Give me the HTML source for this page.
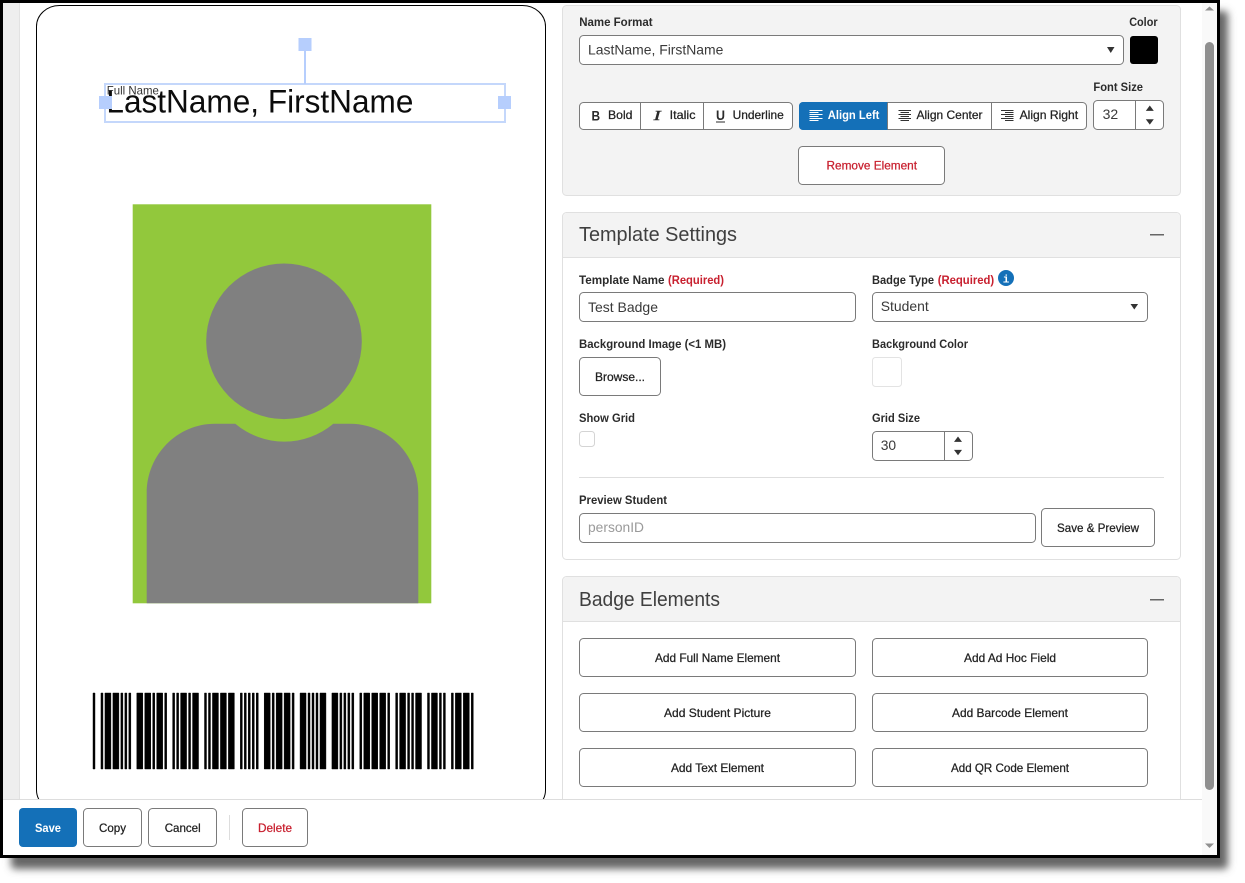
<!DOCTYPE html>
<html lang="en">
<head>
<meta charset="utf-8">
<title>Badge Template Editor</title>
<style>
html,body{margin:0;padding:0;background:#fff;width:1245px;height:883px;overflow:hidden}
svg{display:block}
text{font-family:"Liberation Sans",Arial,sans-serif;white-space:pre}
.l{font-size:12px;font-weight:bold;fill:#2b2b2b}
.r{fill:#c8202f}
.b{font-size:12px;font-weight:bold;fill:#2b2b2b;opacity:.93}
.m{font-weight:normal;fill:#222;stroke:#222;stroke-width:.25;opacity:1}
.d{font-weight:normal;fill:#c8202f;stroke:#c8202f;stroke-width:.25;opacity:1}
.v{font-size:14px;fill:#3a3a3a}
.h{font-size:20px;fill:#3f3f3f}
.box{fill:#fff;stroke:#7a7a7a;stroke-width:1}
.div{stroke:#7a7a7a;stroke-width:1}
.ic{stroke-width:1;fill:none}
</style>
</head>
<body>
<svg width="1245" height="883" viewBox="0 0 1245 883" xmlns="http://www.w3.org/2000/svg">
<defs>
<filter id="sh" x="-5%" y="-5%" width="110%" height="110%"><feGaussianBlur stdDeviation="4"/></filter>
<clipPath id="view"><rect x="3" y="3" width="1214" height="796"/></clipPath>
</defs>

<!-- window shadow + frame -->
<rect x="11" y="11" width="1217" height="858" rx="4" fill="#666" filter="url(#sh)"/>
<rect x="0" y="0" width="1220" height="858" fill="#000"/>
<rect x="3" y="3" width="1214" height="852" fill="#fff"/>

<!-- left gutter -->
<rect x="3" y="3" width="16" height="796" fill="#eeeeee"/>
<rect x="19" y="3" width="1" height="796" fill="#e2e2e2"/>

<g clip-path="url(#view)">
<!-- badge card -->
<rect x="36.5" y="5.5" width="509" height="805.5" rx="23" ry="21" fill="#fff" stroke="#000" stroke-width="1"/>

<!-- name element -->
<text x="106.4" y="112.7" font-size="32" fill="#0c0c0c" textLength="307" lengthAdjust="spacingAndGlyphs">LastName, FirstName</text>
<text x="106.8" y="94.3" font-size="12" fill="#333" textLength="52" lengthAdjust="spacingAndGlyphs">Full Name</text>
<rect x="105" y="84" width="400" height="38" fill="none" stroke="#c4d7fb" stroke-width="2"/>
<rect x="304" y="51" width="2" height="33" fill="#b6cefd"/>
<rect x="298.5" y="38" width="13" height="13" fill="#b6cefd"/>
<rect x="99" y="96" width="13" height="13" fill="#b6cefd"/>
<rect x="498" y="96" width="13" height="13" fill="#b6cefd"/>

<!-- photo -->
<rect x="132.7" y="204.3" width="298.6" height="399" fill="#92c83c"/>
<circle cx="284" cy="341.3" r="77.8" fill="#808080"/>
<path d="M146.7 603.3V493C146.7 455 177 423.7 215 423.7H235.3A76 76 0 0 0 333.3 423.7H350C388 423.7 418.3 455 418.3 493V603.3Z" fill="#808080"/>

<!-- barcode -->
<g transform="translate(93 693) scale(.9955 1) translate(-93 -693)">
<path fill="#000" stroke="#000" stroke-width=".45" d="M93 693h2v76h-2zM101 693h2v76h-2zM105 693h6v76h-6zM113 693h6v76h-6zM121 693h2v76h-2z
M125 693h2v76h-2zM129 693h2v76h-2zM137 693h6v76h-6zM145 693h6v76h-6zM153 693h2v76h-2z
M157 693h6v76h-6zM165 693h2v76h-2zM173 693h2v76h-2zM177 693h2v76h-2zM181 693h6v76h-6z
M189 693h2v76h-2zM193 693h6v76h-6zM205 693h2v76h-2zM209 693h2v76h-2zM213 693h6v76h-6z
M221 693h6v76h-6zM229 693h6v76h-6zM241 693h2v76h-2zM245 693h2v76h-2zM249 693h2v76h-2z
M253 693h2v76h-2zM257 693h2v76h-2zM265 693h6v76h-6zM273 693h2v76h-2zM277 693h6v76h-6z
M285 693h6v76h-6zM293 693h2v76h-2zM301 693h6v76h-6zM309 693h2v76h-2zM313 693h2v76h-2z
M317 693h2v76h-2zM321 693h6v76h-6zM333 693h6v76h-6zM341 693h2v76h-2zM345 693h2v76h-2z
M349 693h2v76h-2zM353 693h2v76h-2zM361 693h2v76h-2zM365 693h6v76h-6zM373 693h6v76h-6z
M381 693h6v76h-6zM389 693h2v76h-2zM397 693h2v76h-2zM401 693h6v76h-6zM409 693h2v76h-2z
M413 693h2v76h-2zM417 693h6v76h-6zM429 693h2v76h-2zM433 693h6v76h-6zM441 693h2v76h-2z
M445 693h2v76h-2zM453 693h2v76h-2zM457 693h6v76h-6zM465 693h6v76h-6zM473 693h2v76h-2z"/>
</g>

<!-- element settings panel -->
<rect x="562.5" y="5.5" width="618" height="190" rx="4" fill="#f3f3f3" stroke="#e0e0e0"/>
<text class="l" x="579.2" y="26" textLength="73.4" lengthAdjust="spacingAndGlyphs">Name Format</text>
<text class="l" x="1129.2" y="26" textLength="28.4" lengthAdjust="spacingAndGlyphs">Color</text>
<rect class="box" x="579.5" y="35.5" width="544" height="29" rx="4"/>
<text class="v" x="588" y="54.3" textLength="135.4" lengthAdjust="spacingAndGlyphs">LastName, FirstName</text>
<path d="M1107 47h7.5l-3.75 6z" fill="#333"/>
<rect x="1130" y="36" width="28" height="28" rx="3" fill="#000"/>
<text class="l" x="1093.4" y="91" textLength="49.6" lengthAdjust="spacingAndGlyphs">Font Size</text>

<!-- B I U group -->
<rect class="box" x="579.5" y="102.5" width="213" height="27" rx="4"/>
<line class="div" x1="640.5" y1="102.5" x2="640.5" y2="129.5"/>
<line class="div" x1="703.5" y1="102.5" x2="703.5" y2="129.5"/>
<text x="591.5" y="120.3" font-size="14" font-weight="bold" fill="#2b2b2b" textLength="8.6" lengthAdjust="spacingAndGlyphs">B</text>
<text class="b m" x="608" y="119" textLength="24.5" lengthAdjust="spacingAndGlyphs">Bold</text>
<text x="653.6" y="120" font-size="14" font-style="italic" fill="#2b2b2b" style="font-family:'Liberation Serif',serif" stroke="#2b2b2b" stroke-width=".4" textLength="7" lengthAdjust="spacingAndGlyphs">I</text>
<text class="b m" x="669.7" y="119" textLength="25.8" lengthAdjust="spacingAndGlyphs">Italic</text>
<text x="716" y="120" font-size="14" font-weight="bold" fill="#2b2b2b" textLength="9" lengthAdjust="spacingAndGlyphs">U</text>
<rect x="716" y="121.5" width="9" height="1" fill="#2b2b2b"/>
<text class="b m" x="732.6" y="119" textLength="51.2" lengthAdjust="spacingAndGlyphs">Underline</text>

<!-- align group -->
<rect class="box" x="799.5" y="102.5" width="287" height="27" rx="4"/>
<path d="M803 102H888V130H803A4 4 0 0 1 799 126V106A4 4 0 0 1 803 102Z" fill="#1470b8"/>
<line class="div" x1="887.5" y1="102.5" x2="887.5" y2="129.5"/>
<line class="div" x1="991.5" y1="102.5" x2="991.5" y2="129.5"/>
<path class="ic" stroke="#fff" d="M809.5 110.5h13M809.5 112.5h9M809.5 114.5h13M809.5 116.5h9M809.5 118.5h13M809.5 120.5h9"/>
<text class="b" x="827.8" y="119" textLength="51.6" lengthAdjust="spacingAndGlyphs" style="fill:#fff;opacity:1">Align Left</text>
<path class="ic" stroke="#333" d="M898.5 110.5h12.5M900.5 112.5h8.5M898.5 114.5h12.5M900.5 116.5h8.5M898.5 118.5h12.5M900.5 120.5h8.5"/>
<text class="b m" x="916.5" y="119" textLength="66" lengthAdjust="spacingAndGlyphs">Align Center</text>
<path class="ic" stroke="#333" d="M1001 110.5h12.5M1005 112.5h8.5M1001 114.5h12.5M1005 116.5h8.5M1001 118.5h12.5M1005 120.5h8.5"/>
<text class="b m" x="1019.6" y="119" textLength="58.5" lengthAdjust="spacingAndGlyphs">Align Right</text>

<!-- font size spinner -->
<rect class="box" x="1093.5" y="100.5" width="70" height="29" rx="4"/>
<line class="div" x1="1135.5" y1="100.5" x2="1135.5" y2="129.5"/>
<text class="v" x="1102.6" y="119" textLength="15.6" lengthAdjust="spacingAndGlyphs">32</text>
<path d="M1145.8 110.9l4-5.4 4 5.4zM1145.8 119.2h8l-4 5.4z" fill="#333"/>

<rect class="box" x="798.5" y="146.5" width="146" height="38" rx="4"/>
<text class="b d" x="826.5" y="169.7" textLength="90.5" lengthAdjust="spacingAndGlyphs">Remove Element</text>

<!-- template settings -->
<rect x="562.5" y="212.5" width="618" height="347" rx="4" fill="#fff" stroke="#e0e0e0"/>
<path d="M566.5 213H1176.5A4 4 0 0 1 1180 217V257.5H563V217A4 4 0 0 1 566.5 213Z" fill="#f3f3f3"/>
<line x1="563" y1="257.5" x2="1180" y2="257.5" stroke="#e0e0e0"/>
<text class="h" x="579" y="241" textLength="158" lengthAdjust="spacingAndGlyphs">Template Settings</text>
<rect x="1150" y="234" width="14" height="1.5" fill="#666"/>

<text class="l" x="579" y="284" textLength="85.5" lengthAdjust="spacingAndGlyphs">Template Name</text>
<text class="l r" x="668" y="284" textLength="56" lengthAdjust="spacingAndGlyphs" style="fill:#c8202f">(Required)</text>
<rect class="box" x="579.5" y="292.5" width="276" height="29" rx="4"/>
<text class="v" x="588" y="312" textLength="70" lengthAdjust="spacingAndGlyphs">Test Badge</text>

<text class="l" x="872" y="284" textLength="62" lengthAdjust="spacingAndGlyphs">Badge Type</text>
<text class="l r" x="937.7" y="284" textLength="56.5" lengthAdjust="spacingAndGlyphs" style="fill:#c8202f">(Required)</text>
<circle cx="1006" cy="278" r="8" fill="#1470b8"/>
<text x="1006" y="282.5" font-size="11" font-weight="bold" fill="#fff" text-anchor="middle" style="font-family:'Liberation Mono',monospace">i</text>
<rect class="box" x="872.5" y="292.5" width="275" height="29" rx="4"/>
<text class="v" x="880.7" y="311" textLength="48" lengthAdjust="spacingAndGlyphs">Student</text>
<path d="M1130.5 304h7.6l-3.8 5.5z" fill="#333"/>

<text class="l" x="579" y="348" textLength="147" lengthAdjust="spacingAndGlyphs">Background Image (&lt;1 MB)</text>
<rect class="box" x="579.5" y="357.5" width="81" height="38" rx="4"/>
<text class="b m" x="595" y="381" textLength="50" lengthAdjust="spacingAndGlyphs">Browse...</text>

<text class="l" x="872" y="348" textLength="96" lengthAdjust="spacingAndGlyphs">Background Color</text>
<rect x="872.5" y="357.5" width="29" height="29" rx="3" fill="#fff" stroke="#e3e3e3"/>

<text class="l" x="579" y="422" textLength="56" lengthAdjust="spacingAndGlyphs">Show Grid</text>
<rect x="579.5" y="431.5" width="15" height="15" rx="3" fill="#fff" stroke="#d4d4d4"/>

<text class="l" x="872" y="422" textLength="48" lengthAdjust="spacingAndGlyphs">Grid Size</text>
<rect class="box" x="872.5" y="431.5" width="100" height="29" rx="4"/>
<line class="div" x1="944.5" y1="431.5" x2="944.5" y2="460.5"/>
<text class="v" x="880.7" y="450" textLength="15.4" lengthAdjust="spacingAndGlyphs">30</text>
<path d="M954 441.9l4-5.4 4 5.4zM954 449.9h8l-4 5.4z" fill="#333"/>

<line x1="579" y1="477.5" x2="1164" y2="477.5" stroke="#dedede"/>

<text class="l" x="579" y="504" textLength="88" lengthAdjust="spacingAndGlyphs">Preview Student</text>
<rect class="box" x="579.5" y="513.5" width="456" height="29" rx="4"/>
<text x="588" y="532" font-size="14" fill="#9a9a9a" textLength="56" lengthAdjust="spacingAndGlyphs">personID</text>
<rect class="box" x="1041.5" y="508.5" width="113" height="38" rx="4"/>
<text class="b m" x="1057" y="532" textLength="82" lengthAdjust="spacingAndGlyphs">Save &amp; Preview</text>

<!-- badge elements -->
<rect x="562.5" y="576.5" width="618" height="260" rx="4" fill="#fff" stroke="#e0e0e0"/>
<path d="M566.5 577H1176.5A4 4 0 0 1 1180 581V621.5H563V581A4 4 0 0 1 566.5 577Z" fill="#f3f3f3"/>
<line x1="563" y1="621.5" x2="1180" y2="621.5" stroke="#e0e0e0"/>
<text class="h" x="579" y="606" textLength="141" lengthAdjust="spacingAndGlyphs">Badge Elements</text>
<rect x="1150" y="599" width="14" height="1.5" fill="#666"/>

<rect class="box" x="579.5" y="638.5" width="276" height="38" rx="4"/>
<text class="b m" x="655" y="662" textLength="125" lengthAdjust="spacingAndGlyphs">Add Full Name Element</text>
<rect class="box" x="872.5" y="638.5" width="275" height="38" rx="4"/>
<text class="b m" x="964" y="662" textLength="92" lengthAdjust="spacingAndGlyphs">Add Ad Hoc Field</text>
<rect class="box" x="579.5" y="693.5" width="276" height="38" rx="4"/>
<text class="b m" x="664" y="717" textLength="107" lengthAdjust="spacingAndGlyphs">Add Student Picture</text>
<rect class="box" x="872.5" y="693.5" width="275" height="38" rx="4"/>
<text class="b m" x="952" y="717" textLength="116" lengthAdjust="spacingAndGlyphs">Add Barcode Element</text>
<rect class="box" x="579.5" y="748.5" width="276" height="38" rx="4"/>
<text class="b m" x="671" y="772" textLength="93" lengthAdjust="spacingAndGlyphs">Add Text Element</text>
<rect class="box" x="872.5" y="748.5" width="275" height="38" rx="4"/>
<text class="b m" x="951" y="772" textLength="118" lengthAdjust="spacingAndGlyphs">Add QR Code Element</text>
</g>

<!-- footer -->
<rect x="3" y="799" width="1199" height="56" fill="#fff"/>
<rect x="3" y="799" width="1199" height="1" fill="#dddddd"/>
<rect x="19" y="808" width="58" height="39" rx="4" fill="#1470b8"/>
<text class="b" x="35" y="832" textLength="26" lengthAdjust="spacingAndGlyphs" style="fill:#fff;opacity:1">Save</text>
<rect class="box" x="83.5" y="808.5" width="58" height="38" rx="4"/>
<text class="b m" x="99" y="832" textLength="27" lengthAdjust="spacingAndGlyphs">Copy</text>
<rect class="box" x="148.5" y="808.5" width="68" height="38" rx="4"/>
<text class="b m" x="164.7" y="832" textLength="36" lengthAdjust="spacingAndGlyphs">Cancel</text>
<rect x="229" y="815" width="1" height="25" fill="#dddddd"/>
<rect class="box" x="242.5" y="808.5" width="65" height="38" rx="4"/>
<text class="b d" x="258" y="832" textLength="34" lengthAdjust="spacingAndGlyphs">Delete</text>

<!-- scrollbar -->
<rect x="1202" y="3" width="15" height="852" fill="#f9f9f9"/>
<path d="M1205 10.5l4.5-4 4.5 4z" fill="#8f8f8f"/>
<rect x="1205" y="42" width="9" height="748" rx="4.5" fill="#8f8f8f"/>
<path d="M1205 843.5h9l-4.5 4.5z" fill="#8f8f8f"/>
</svg>
</body>
</html>
